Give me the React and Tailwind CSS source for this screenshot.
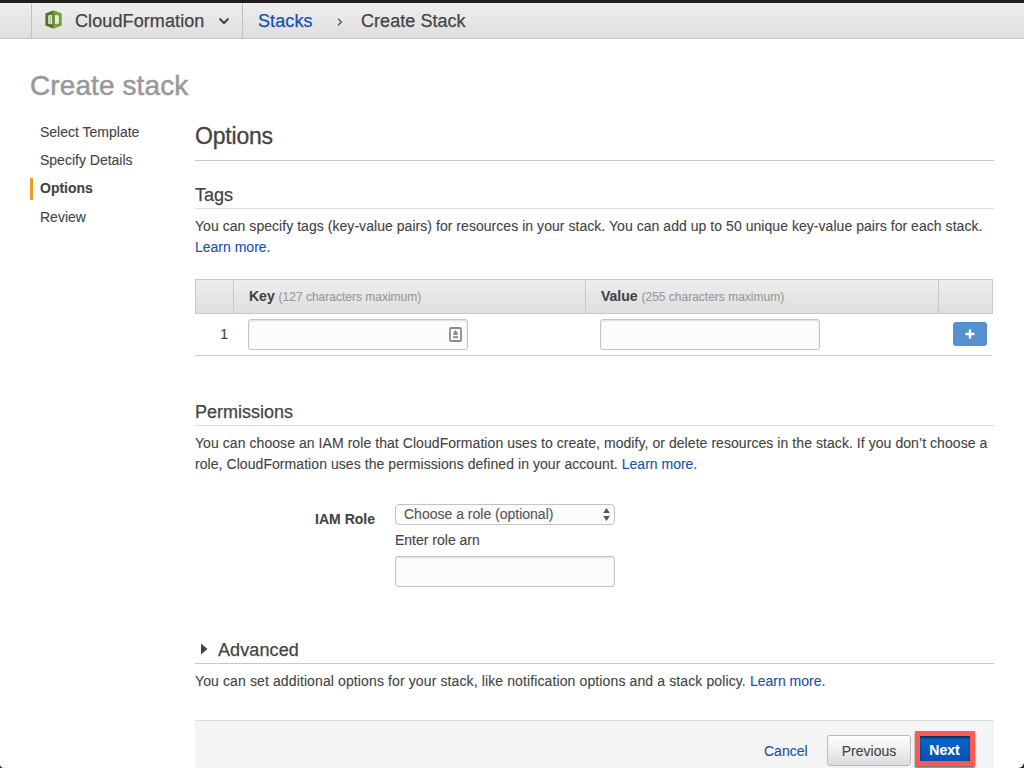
import React from "react";

const steps = [
  { label: "Select Template", spacing: "tracking-normal" },
  { label: "Specify Details", spacing: "tracking-normal" },
  { label: "Options", active: true, spacing: "tracking-normal" },
  { label: "Review", spacing: "tracking-normal" },
];

const inputClass =
  "block h-[31px] w-[220px] rounded-[3px] border border-[#c4c4c4] bg-[#fcfcfc] shadow-[inset_0_1px_2px_rgba(0,0,0,0.12)] outline-none";

function Link({ children, className = "" }) {
  return <a className={`text-[#1552ad] ${className}`}>{children}</a>;
}

function StackLogo() {
  return (
    <svg width="17" height="19" viewBox="0 0 17 19" className="-mt-[2px] ml-[13px] shrink-0">
      <path d="M8.5 0.5 L16.5 3.5 V15.5 L8.5 18.5 L0.5 15.5 V3.5 Z" fill="#86a850" />
      <path d="M8.5 0.5 V4.5 L3 5.2 V13.8 L8.5 14.5 V18.5 L0.5 15.5 V3.5 Z" fill="#55732a" />
      <path d="M8.5 0.5 V4.5 L14 5.2 V13.8 L8.5 14.5 V18.5 L16.5 15.5 V3.5 Z" fill="#76a03c" />
      <path d="M3.2 5.6 L7.4 5 V14 L3.2 13.4 Z" fill="#e0e8d4" />
      <path d="M4.6 6.2 L5.8 6 V13 L4.6 12.8 Z" fill="#a9bd8c" />
      <path d="M9.8 5 L13.8 5.6 V13.4 L9.8 14 Z" fill="#e9f0df" />
      <path d="M7.2 3.6 H9.8 V15.4 H7.2 Z" fill="#6a9033" />
    </svg>
  );
}

function Header() {
  return (
    <header className="flex h-[39px] border-t-[3px] border-b border-t-[#231f21] border-b-[#c3c3c3] bg-linear-to-b from-[#eeeeee] to-[#dfdfdf] text-[18px] leading-[36px] text-[#444] [-webkit-text-stroke:0.25px]">
      <div className="ml-[31px] flex w-[212px] items-center border-x border-[#c2c2c2]">
        <StackLogo />
        <span className="ml-[13px] w-[130px] whitespace-nowrap tracking-[0.1px]">CloudFormation</span>
        <svg width="12" height="8" viewBox="0 0 12 8" className="ml-[13px]">
          <path d="M1.5 1.5 L6 6 L10.5 1.5" fill="none" stroke="#444" strokeWidth="2" />
        </svg>
      </div>
      <Link className="ml-[15px] w-[79px] tracking-[0.1px]">Stacks</Link>
      <svg width="6" height="8" viewBox="0 0 6 8" className="mt-[15px]">
        <path d="M1 0.7 L4.4 4 L1 7.3" fill="none" stroke="#555" strokeWidth="1.3" />
      </svg>
      <span className="ml-[18px] tracking-[0.05px]">Create Stack</span>
    </header>
  );
}

function Sidebar() {
  return (
    <nav className="mt-[14px] w-[165px] shrink-0">
      {steps.map((s) => (
        <div key={s.label} className="flex h-[28.4px] items-center">
          <div
            className={`flex h-[22px] items-center border-l-[3px] pl-[7px] ${s.spacing} ${
              s.active ? "border-[#ef9b20] font-bold" : "border-transparent"
            }`}
          >
            {s.label}
          </div>
        </div>
      ))}
    </nav>
  );
}

function TagsTable() {
  return (
    <div className="mt-[21px] w-[798px]">
      <div className="flex h-[35px] border border-[#c8c8c8] bg-linear-to-b from-[#eeeeee] to-[#dedede] leading-[33px]">
        <div className="w-[38px] shrink-0 border-r border-[#c8c8c8]" />
        <div className="w-[352px] shrink-0 border-r border-[#c8c8c8] pl-[15px]">
          <b>Key</b> <span className="text-[12px] text-[#999]">(127 characters maximum)</span>
        </div>
        <div className="w-[353px] shrink-0 border-r border-[#c8c8c8] pl-[15px]">
          <b>Value</b> <span className="text-[12px] text-[#999]">(255 characters maximum)</span>
        </div>
      </div>
      <div className="flex h-[42px] w-[797px] items-center border-b border-[#ccc]">
        <div className="w-[53px] pr-[20px] text-right">1</div>
        <div className="flex w-[352px] items-center">
          <input className={inputClass} />
          <svg width="13" height="15" viewBox="0 0 13 15" className="-ml-[19px]">
            <rect x="1" y="1" width="11" height="13" rx="1" fill="#fff" stroke="#8c8c8c" strokeWidth="1.8" />
            <path d="M6.5 3 L8.5 5.5 V8 H4.5 V5.5 Z" fill="#8a8a8a" />
            <rect x="4" y="9" width="5" height="2.4" fill="#9a9a9a" />
          </svg>
        </div>
        <input className={inputClass} />
        <button className="mr-[5px] mb-[2px] ml-auto flex h-[24px] w-[34px] items-center justify-center rounded-[3px] bg-[#5590cf]">
          <svg width="10" height="10" viewBox="0 0 10 10">
            <path d="M5 0.5 V9.5 M0.5 5 H9.5" stroke="#fff" strokeWidth="2.4" />
          </svg>
        </button>
      </div>
    </div>
  );
}

function RoleForm() {
  return (
    <div className="mt-[29px] flex">
      <div className="w-[180px] pt-[4px] text-right leading-[22px] font-bold">IAM Role</div>
      <div className="ml-[20px] w-[220px]">
        <div className="flex h-[21px] items-center justify-between rounded-[4px] border border-[#c4c4c4] bg-[#fcfcfc] pr-[4px] pl-[8px] leading-[19px] text-[#555]">
          <span>Choose a role (optional)</span>
          <svg width="7" height="13" viewBox="0 0 7 13">
            <path d="M3.5 0 L6.8 5 H0.2 Z M3.5 13 L6.8 8 H0.2 Z" fill="#555" />
          </svg>
        </div>
        <div className="mt-[5px] mb-[6px] leading-[20px]">Enter role arn</div>
        <input className={inputClass} />
      </div>
    </div>
  );
}

function Footer() {
  return (
    <footer className="mt-[28px] flex h-[48px] items-start border-t border-[#dddddd] bg-[#f4f4f4]">
      <Link className="ml-[569px] w-[63px] pt-[19px] leading-[22px]">Cancel</Link>
      <button className="mt-[14px] h-[31px] w-[84px] rounded-[3px] border border-[#bbb] bg-linear-to-b from-white to-[#dcdcdc] pt-px text-[#444]">
        Previous
      </button>
      <div className="mt-[10px] ml-[4px] border-[5px] border-[#fb5a50] shadow-[0_2px_2px_rgba(0,0,0,0.55)]">
        <button className="block h-[25px] w-[50px] bg-linear-to-b from-[#0568cc] to-[#0653b2] pt-[4px] pr-px leading-[21px] font-bold text-white shadow-[inset_0_2px_2px_rgba(0,0,0,0.55)]">
          Next
        </button>
      </div>
    </footer>
  );
}

export default function App() {
  return (
    <div className="h-[768px] w-[1024px] bg-[#222]">
      <div className="h-full overflow-hidden rounded-br-[6px] rounded-bl-[4px] bg-white font-['Liberation_Sans',Arial,sans-serif] text-[14px] text-[#444] [-webkit-text-stroke:0.12px]">
        <Header />
        <h1 className="mt-[29px] ml-[30px] text-[28px] leading-[36px] tracking-[0.1px] text-[#999] [-webkit-text-stroke:0.5px]">
          Create stack
        </h1>
        <div className="flex pl-[30px]">
          <Sidebar />
          <main className="w-[799px]">
            <h2 className="mt-[16px] h-[41px] border-b border-[#c8c8c8] text-[23px] leading-[32px] tracking-[-0.2px] [-webkit-text-stroke:0.3px]">
              Options
            </h2>
            <section>
              <h3 className="mt-[24px] h-[24px] border-b border-[#ddd] text-[18px] leading-[20px] [-webkit-text-stroke:0.25px]">Tags</h3>
              <p className="mt-[7px] leading-[21px] whitespace-nowrap">
                <span className="tracking-[0.046px]">
                  You can specify tags (key-value pairs) for resources in your stack. You can add up to 50 unique key-value pairs for each stack.
                </span>
                <br />
                <Link>Learn more.</Link>
              </p>
              <TagsTable />
            </section>
            <section>
              <h3 className="mt-[46px] h-[24px] border-b border-[#ddd] text-[18px] leading-[20px] [-webkit-text-stroke:0.25px]">
                Permissions
              </h3>
              <p className="mt-[7px] leading-[21px] whitespace-nowrap">
                <span className="tracking-[0.063px]">
                  You can choose an IAM role that CloudFormation uses to create, modify, or delete resources in the stack. If you don’t choose a
                </span>
                <br />
                <span className="tracking-[0.063px]">role, CloudFormation uses the permissions defined in your account. </span>
                <Link>Learn more.</Link>
              </p>
              <RoleForm />
            </section>
            <section>
              <h3 className="mt-[53px] flex h-[24px] border-b border-[#c8c8c8] text-[18px] leading-[20px] tracking-[0.1px] [-webkit-text-stroke:0.25px]">
                <svg width="7" height="12" viewBox="0 0 7 12" className="mt-[3px] mr-[10px] ml-[6px]">
                  <path d="M0 0.5 L6.5 6 L0 11.5 Z" fill="#444" />
                </svg>
                Advanced
              </h3>
              <p className="mt-[7px] leading-[21px] whitespace-nowrap">
                <span className="tracking-[0.117px]">
                  You can set additional options for your stack, like notification options and a stack policy.{" "}
                </span>
                <Link>Learn more.</Link>
              </p>
            </section>
            <Footer />
          </main>
        </div>
      </div>
    </div>
  );
}
